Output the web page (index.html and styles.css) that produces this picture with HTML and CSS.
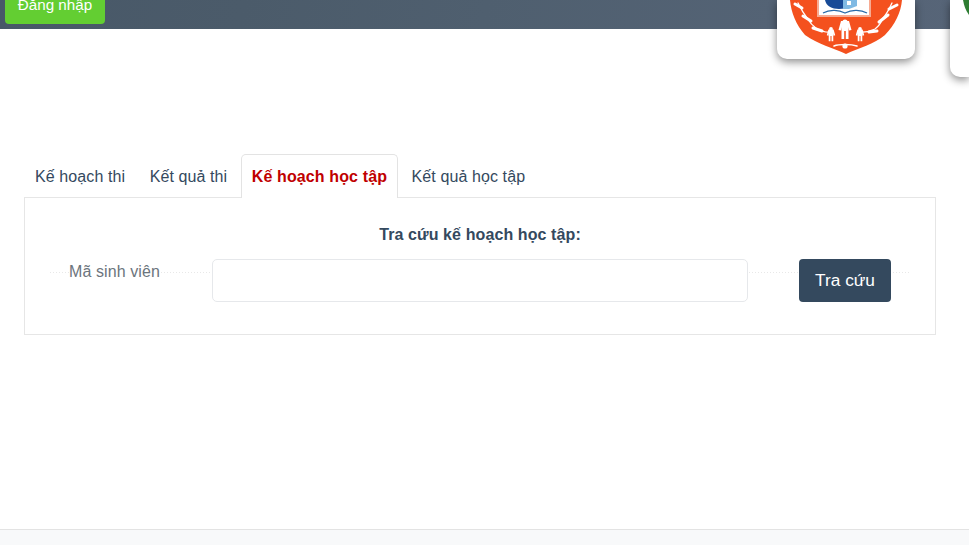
FILE: index.html
```html
<!DOCTYPE html>
<html lang="vi">
<head>
  <meta charset="UTF-8">
  <meta name="viewport" content="width=device-width, initial-scale=1.0">
  <title>Tra cứu kế hoạch học tập</title>
  <link rel="stylesheet" href="styles.css">
</head>
<body>
  <header class="topbar">
    <button type="button" class="login-button">Đăng nhập</button>

    <!-- School logos hang over the bottom of the bar -->
    <div class="logo-card logo-card-main">
      <svg class="emblem" width="138" height="59" viewBox="0 0 138 59">
        <defs>
          <path id="person" d="M-4 -7H4L6.5 2L4 2.5L3.5 -1V11H0.8V3H-0.8V11H-3.5V-1L-4 2.5L-6.5 2Z" fill="#fff"/>
        </defs>
        <path d="M13 0H125C124 12 118 25 108 35C97 44 82 48 69 54C56 48 41 44 28 35C19 25 14 12 13 0Z" fill="#f4511e"/>
        <!-- book and globe -->
        <rect x="40" y="0" width="54" height="17" fill="#f7ab92"/>
        <rect x="42" y="0" width="50" height="15" fill="#fff"/>
        <path d="M48 0H77C76 6 70 9 62 9C55 9 49 6 48 0Z" fill="#174a97"/>
        <path d="M66 0H80V6L72 9H66Z" fill="#7fb9e3"/>
        <path d="M70 1H74V5H70Z" fill="#fff"/>
        <path d="M46 13C53 9 62 10 68 13C74 10 83 9 90 13" fill="none" stroke="#2a6ba8" stroke-width="1.3"/>
        <!-- chain of people -->
        <use href="#person" x="68" y="28"/>
        <use href="#person" transform="translate(54 34) scale(0.65)"/>
        <use href="#person" transform="translate(83 34) scale(0.65)"/>
        <g fill="none" stroke="#fff" stroke-linecap="round">
          <path d="M54 32C48 33 44 31 40 29C36 26 33 23 30 18C27 14 24 9 21 3" stroke-width="1.3"/>
          <path d="M83 32C89 33 93 31 98 29C102 26 104 23 106 18C110 14 112 9 115 3" stroke-width="1.3"/>
          <path d="M36 28L45 31M26 16L34 21M18 4L25 8" stroke-width="3"/>
          <path d="M100 31L92 32M111 15L102 22M120 5L112 9" stroke-width="3"/>
          <path d="M57 46C62 44 74 44 80 46" stroke-width="1.6"/>
        </g>
        <g fill="#fff">
          <circle cx="68" cy="22" r="2.6"/>
          <circle cx="54" cy="29" r="1.9"/>
          <circle cx="83" cy="29" r="1.9"/>
          <circle cx="68" cy="46" r="2.6"/>
        </g>
      </svg>
    </div>
    <div class="logo-card logo-card-side">
      <svg class="emblem" width="19" height="20" viewBox="0 0 19 20">
        <path d="M13 0C14 6 16 11 19 15V0Z" fill="#2e7d32"/>
      </svg>
    </div>
  </header>

  <main class="content">
    <ul class="tabs">
      <li class="tab">Kế hoạch thi</li>
      <li class="tab">Kết quả thi</li>
      <li class="tab tab-active">Kế hoạch học tập</li>
      <li class="tab">Kết quả học tập</li>
    </ul>

    <form class="panel">
      <h2 class="panel-title">Tra cứu kế hoạch học tập:</h2>
      <div class="search-row">
        <label class="search-label" for="student-id">Mã sinh viên</label>
        <input class="search-input" type="text" id="student-id">
        <button type="button" class="search-button">Tra cứu</button>
      </div>
    </form>
  </main>

  <footer class="footer"></footer>
</body>
</html>
```

FILE: styles.css
```css
* {
  box-sizing: border-box;
}
html, body {
  height: 100%;
}
body {
  display: flex;
  flex-direction: column;
  margin: 0;
  overflow: hidden;
  font-family: "Liberation Sans", Arial, sans-serif;
  font-size: 16px;
  line-height: 24px;
  letter-spacing: 0.1px;
  color: #34495e;
  background-color: #fff;
}

.topbar {
  position: relative;
  flex: none;
  height: 29px;
  padding-left: 5px;
  background: linear-gradient(100deg, #485868 0%, #4b5b6a 25%, #4f5f6f 50%, #546375 80%, #576578 100%);
}
.login-button {
  display: block;
  width: 100px;
  height: 38px;
  margin-top: -14px;
  padding: 0;
  font: inherit;
  font-size: 15.2px;
  letter-spacing: 0;
  white-space: nowrap;
  color: #fff;
  background-color: #63ce32;
  border: none;
  border-radius: 4px;
}

.logo-card {
  position: absolute;
  top: 0;
  overflow: hidden;
  background-color: #fff;
  box-shadow: 0 3px 8px rgba(0, 0, 0, 0.45);
}
.emblem {
  display: block;
  filter: blur(0.4px);
}
.logo-card-main {
  left: 777px;
  width: 138px;
  height: 59px;
  border-radius: 0 0 10px 10px;
}
.logo-card-side {
  left: 950px;
  width: 19px;
  height: 77px;
  border-radius: 0 0 0 10px;
}

.content {
  flex: 1;
  padding: 125px 33px 0 24px;
}
.tabs {
  display: flex;
  gap: 2.5px;
  margin: 0;
  padding: 0;
  list-style: none;
}
.tab {
  height: 43px;
  padding: 10px 10px 0;
  border: 1px solid transparent;
  border-bottom: none;
}
.tab-active {
  position: relative;
  height: 44px;
  margin-bottom: -1px;
  font-weight: bold;
  letter-spacing: 0.12px;
  color: #c00000;
  background-color: #fff;
  border-color: #e3e3e3;
  border-radius: 5px 5px 0 0;
}

.panel {
  height: 138px;
  padding: 25px 0 0;
  border: 1px solid #e6e6e6;
}
.panel-title {
  margin: 0 0 12px;
  font-size: 16px;
  line-height: 24px;
  text-align: center;
}
.search-row {
  display: flex;
  align-items: flex-start;
  margin: 0 24px 0 25px;
  padding: 0 20px 0 19px;
  background: repeating-linear-gradient(90deg, #e8e8e8 0 1px, #fff 1px 3px) 0 13px / 100% 1px no-repeat;
}
.search-label {
  padding-top: 1px;
  color: #6c757d;
  background-color: #fff;
}
.search-input {
  flex: 1;
  height: 43px;
  margin: 0 51px 0 52px;
  border: 1px solid #e6e8eb;
  border-radius: 5px;
  background-color: #fff;
}
.search-button {
  width: 92px;
  height: 43px;
  padding: 0;
  font: inherit;
  font-size: 17.3px;
  line-height: 27px;
  letter-spacing: 0;
  color: #fff;
  background-color: #34495e;
  border: none;
  border-radius: 4px;
}

.footer {
  flex: none;
  height: 16px;
  background-color: #f8f9fa;
  border-top: 1px solid #e3e3e3;
}
```
